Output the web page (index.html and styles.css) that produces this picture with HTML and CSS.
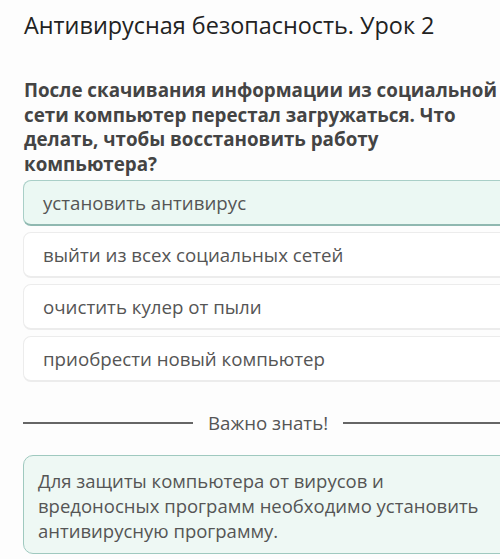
FILE: index.html
```html
<!DOCTYPE html>
<html lang="ru">
<head>
    <meta charset="UTF-8">
    <meta name="viewport" content="width=device-width, initial-scale=1.0">
    <title>Антивирусная безопасность. Урок 2</title>
    <link rel="stylesheet" href="styles.css">
</head>
<body>
    <main class="lesson">
        <h1 class="lesson-title">Антивирусная безопасность. Урок 2</h1>

        <!-- Question -->
        <section class="question">
            <p class="question-text">После скачивания информации из социальной сети компьютер перестал загружаться. Что делать, чтобы восстановить работу компьютера?</p>
            <div class="answers">
                <div class="answer selected">установить антивирус</div>
                <div class="answer">выйти из всех социальных сетей</div>
                <div class="answer">очистить кулер от пыли</div>
                <div class="answer">приобрести новый компьютер</div>
            </div>
        </section>

        <!-- Important note -->
        <div class="divider"><span>Важно знать!</span></div>
        <div class="note">Для защиты компьютера от вирусов и вредоносных программ необходимо установить антивирусную программу.</div>
    </main>
</body>
</html>
```

FILE: styles.css
```css
/* General Styles */
html, body {
    margin: 0;
    padding: 0;
    overflow: hidden;
    background-color: #fdfdfd;
    font-family: "Open Sans", Arial, sans-serif;
}

.lesson {
    width: 520px;
    padding: 10px 0 0 23px;
}

.lesson-title {
    margin: 0 0 0 1px;
    font-size: 23.4px;
    font-weight: normal;
    line-height: 30px;
    color: #222;
}

/* Question */
.question {
    margin-top: 38px;
}

.question-text {
    width: 484px;
    margin: 0 0 0 1px;
    font-size: 18.8px;
    font-weight: bold;
    line-height: 24.5px;
    color: #444;
}

.answers {
    display: flex;
    flex-direction: column;
    gap: 6px;
    margin-top: 4px;
}

.answer {
    height: 43px;
    padding: 0 19px;
    display: flex;
    align-items: center;
    font-size: 18.7px;
    color: #555;
    background-color: #fff;
    border: 1px solid #ececec;
    border-bottom-width: 2px;
    border-radius: 8px;
}

.answer.selected {
    background-color: #ebf8f3;
    border-color: #a9cfc7;
    border-bottom-color: #8fb8b0;
}

/* Important note */
.divider {
    display: flex;
    align-items: center;
    gap: 15px;
    margin-top: 28px;
    font-size: 18.7px;
    line-height: 25px;
    color: #555;
}

.divider::before,
.divider::after {
    content: "";
    flex: 1;
    height: 2px;
    background-color: #666;
}

.divider::before {
    flex: 0 0 170px;
}

.note {
    margin-top: 20px;
    padding: 12px 54px 10px 14px;
    font-size: 18.5px;
    line-height: 25px;
    color: #555;
    background-color: #eef8f4;
    border: 1px solid #9fc9bf;
    border-radius: 10px;
}
```
